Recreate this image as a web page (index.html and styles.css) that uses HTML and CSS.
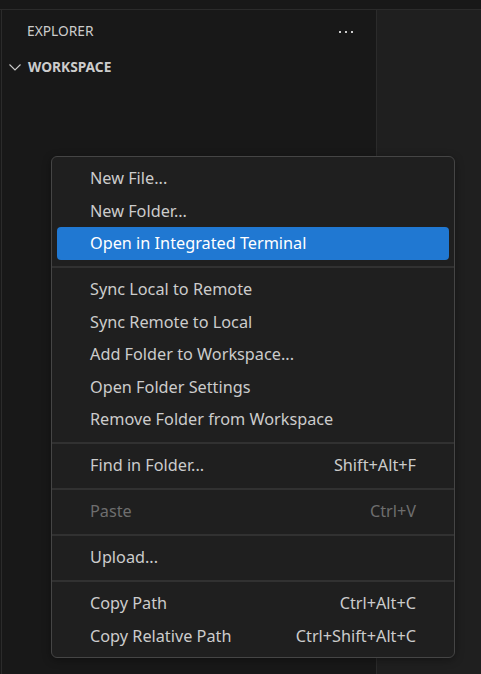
FILE: index.html
```html
<!DOCTYPE html>
<html>
<head>
<meta charset="utf-8">
<link rel="stylesheet" href="styles.css">
</head>
<body>
<div class="top"></div>
<div class="main">
  <div class="sidebar">
    <div class="title">
      <span class="title-text">EXPLORER</span>
      <svg class="dots" width="16" height="4" viewBox="0 0 16 4"><rect x="1" y="1" width="2" height="2" fill="#cccccc"/><rect x="7" y="1" width="2" height="2" fill="#cccccc"/><rect x="13" y="1" width="2" height="2" fill="#cccccc"/></svg>
    </div>
    <div class="section">
      <svg class="chev" width="14" height="14" viewBox="0 0 14 14"><path d="M1.5 4.5 L7 10 L12.5 4.5" fill="none" stroke="#cccccc" stroke-width="1.1"/></svg>
      <span class="section-text">WORKSPACE</span>
    </div>
  </div>
  <div class="editor"></div>
</div>
<div class="menu">
  <div class="item"><span>New File...</span></div>
  <div class="item"><span>New Folder...</span></div>
  <div class="item active"><span>Open in Integrated Terminal</span></div>
  <div class="sep"></div>
  <div class="item"><span>Sync Local to Remote</span></div>
  <div class="item"><span>Sync Remote to Local</span></div>
  <div class="item"><span>Add Folder to Workspace...</span></div>
  <div class="item"><span>Open Folder Settings</span></div>
  <div class="item"><span>Remove Folder from Workspace</span></div>
  <div class="sep"></div>
  <div class="item"><span>Find in Folder...</span><span class="key">Shift+Alt+F</span></div>
  <div class="sep"></div>
  <div class="item disabled"><span>Paste</span><span class="key">Ctrl+V</span></div>
  <div class="sep"></div>
  <div class="item"><span>Upload...</span></div>
  <div class="sep"></div>
  <div class="item"><span>Copy Path</span><span class="key">Ctrl+Alt+C</span></div>
  <div class="item"><span>Copy Relative Path</span><span class="key">Ctrl+Shift+Alt+C</span></div>
</div>
</body>
</html>
```
FILE: styles.css
```css
html, body {
  margin: 0;
  padding: 0;
  background: #181818;
  font-family: "Noto Sans", "Open Sans", sans-serif;
  color: #cccccc;
  height: 674px;
  overflow: hidden;
}
.top {
  height: 9px;
  border-bottom: 1px solid #2b2b2b;
  background: #181818;
}
.main {
  display: flex;
  height: 664px;
}
.sidebar {
  width: 374px;
  margin-left: 1px;
  border-left: 1px solid #2b2b2b;
  border-right: 1px solid #2b2b2b;
  background: #181818;
}
.editor {
  flex: 1;
  background: #1f1f1f;
}
.title {
  display: flex;
  align-items: center;
  justify-content: space-between;
  height: 41px;
  padding: 0 22px 0 25px;
}
.title-text {
  font-size: 13.75px;
}
.dots {
  display: block;
  margin-top: 2px;
}
.section {
  display: flex;
  align-items: center;
  height: 31px;
  padding-left: 6px;
}
.chev {
  display: block;
  margin-right: 6px;
}
.section-text {
  font-size: 13.75px;
  font-weight: 700;
}
.menu {
  position: absolute;
  left: 51px;
  top: 156px;
  width: 392px;
  padding: 5px;
  border: 1px solid #454545;
  border-radius: 6px;
  background: #1f1f1f;
  box-shadow: 0 2px 8px rgba(0, 0, 0, 0.36);
}
.item {
  display: flex;
  align-items: center;
  justify-content: space-between;
  height: 32.5px;
  padding: 0 33px;
  border-radius: 4px;
  font-size: 16.25px;
  color: #cccccc;
}
.item.active {
  background: #2078d2;
  color: #ffffff;
}
.item.disabled {
  color: #6e6e6e;
}
.sep {
  height: 13.5px;
  margin: 0 -5px;
}
.sep::after {
  content: "";
  display: block;
  height: 1px;
  background: #454545;
  transform: translateY(6.5px);
}
```
